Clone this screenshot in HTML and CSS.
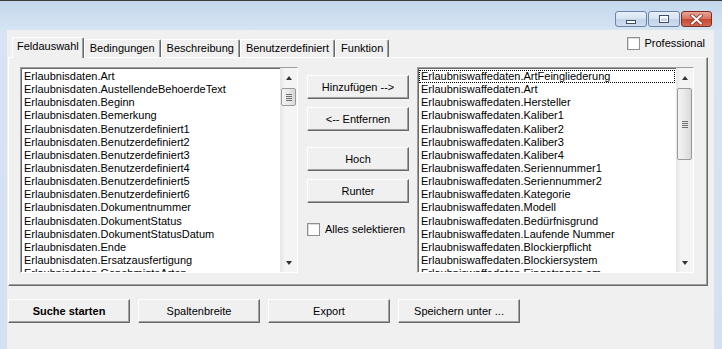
FILE: index.html
```html
<!DOCTYPE html>
<html>
<head>
	<meta charset="utf-8">
	<title>Suche</title>
	<link rel="stylesheet" href="styles.css">
</head>
<body>
	<div class="window">
		<div class="titlebar">
			<div class="caption">
				<span class="cap-btn cap-min"><i></i></span>
				<span class="cap-btn cap-max"><i></i></span>
				<span class="cap-btn cap-close">
					<svg width="13" height="11" viewBox="0 0 13 11">
						<path d="M2 1.5 L11 9.5 M11 1.5 L2 9.5" stroke="#7a2a1e" stroke-width="3.6" stroke-linecap="round"/>
						<path d="M2 1.5 L11 9.5 M11 1.5 L2 9.5" stroke="#fff" stroke-width="2.2" stroke-linecap="round"/>
					</svg>
				</span>
			</div>
		</div>

		<div class="client">
			<div class="topbar">
				<div class="tabs">
					<div class="tab active">Feldauswahl</div>
					<div class="tab">Bedingungen</div>
					<div class="tab">Beschreibung</div>
					<div class="tab">Benutzerdefiniert</div>
					<div class="tab">Funktion</div>
				</div>
				<label class="check pro"><span class="box"></span>Professional</label>
			</div>

			<div class="panel">
				<!-- linke Liste -->
				<div class="listbox list-left">
					<div class="items">
						<div class="item">Erlaubnisdaten.Art</div>
						<div class="item">Erlaubnisdaten.AustellendeBehoerdeText</div>
						<div class="item">Erlaubnisdaten.Beginn</div>
						<div class="item">Erlaubnisdaten.Bemerkung</div>
						<div class="item">Erlaubnisdaten.Benutzerdefiniert1</div>
						<div class="item">Erlaubnisdaten.Benutzerdefiniert2</div>
						<div class="item">Erlaubnisdaten.Benutzerdefiniert3</div>
						<div class="item">Erlaubnisdaten.Benutzerdefiniert4</div>
						<div class="item">Erlaubnisdaten.Benutzerdefiniert5</div>
						<div class="item">Erlaubnisdaten.Benutzerdefiniert6</div>
						<div class="item">Erlaubnisdaten.Dokumentnummer</div>
						<div class="item">Erlaubnisdaten.DokumentStatus</div>
						<div class="item">Erlaubnisdaten.DokumentStatusDatum</div>
						<div class="item">Erlaubnisdaten.Ende</div>
						<div class="item">Erlaubnisdaten.Ersatzausfertigung</div>
						<div class="item">Erlaubnisdaten.GenehmigteArten</div>
					</div>
					<div class="scroll">
						<div class="arrow up"></div>
						<div class="track"><div class="thumb thumb-small"><i></i></div></div>
						<div class="arrow down"></div>
					</div>
				</div>

				<!-- Knoepfe Mitte -->
				<div class="mid">
					<button class="btn">Hinzufügen --&gt;</button>
					<button class="btn">&lt;-- Entfernen</button>
					<button class="btn btn-hoch">Hoch</button>
					<button class="btn">Runter</button>
					<label class="check sel"><span class="box"></span>Alles selektieren</label>
				</div>

				<!-- rechte Liste -->
				<div class="listbox list-right">
					<div class="items">
						<div class="item focus">Erlaubniswaffedaten.ArtFeingliederung</div>
						<div class="item">Erlaubniswaffedaten.Art</div>
						<div class="item">Erlaubniswaffedaten.Hersteller</div>
						<div class="item">Erlaubniswaffedaten.Kaliber1</div>
						<div class="item">Erlaubniswaffedaten.Kaliber2</div>
						<div class="item">Erlaubniswaffedaten.Kaliber3</div>
						<div class="item">Erlaubniswaffedaten.Kaliber4</div>
						<div class="item">Erlaubniswaffedaten.Seriennummer1</div>
						<div class="item">Erlaubniswaffedaten.Seriennummer2</div>
						<div class="item">Erlaubniswaffedaten.Kategorie</div>
						<div class="item">Erlaubniswaffedaten.Modell</div>
						<div class="item">Erlaubniswaffedaten.Bedürfnisgrund</div>
						<div class="item">Erlaubniswaffedaten.Laufende Nummer</div>
						<div class="item">Erlaubniswaffedaten.Blockierpflicht</div>
						<div class="item">Erlaubniswaffedaten.Blockiersystem</div>
						<div class="item">Erlaubniswaffedaten.Eingetragen am</div>
					</div>
					<div class="scroll">
						<div class="arrow up"></div>
						<div class="track"><div class="thumb thumb-big"><i></i></div></div>
						<div class="arrow down"></div>
					</div>
				</div>
			</div>

			<div class="actions">
				<button class="btn btn-wide btn-bold">Suche starten</button>
				<button class="btn btn-wide">Spaltenbreite</button>
				<button class="btn btn-wide">Export</button>
				<button class="btn btn-wide">Speichern unter ...</button>
			</div>
		</div>
	</div>
</body>
</html>
```

FILE: styles.css
```css
*{
	box-sizing: border-box;
}
body{
	margin: 0;
	height: 349px;
	overflow: hidden;
	background: linear-gradient(#c3d7ec, #d6e4f3 30px, #d3e2f2);
	font-family: "Liberation Sans", Arial, sans-serif;
	font-size: 11px;
	color: #000;
}
/*--------Fenster-----------*/
.window{
	height: 349px;
	border-top: 1px solid #3c3c3c;
	display: flex;
	flex-direction: column;
}
.titlebar{
	height: 29px;
	flex-shrink: 0;
	display: flex;
	justify-content: flex-end;
	padding: 10px 10px 0 0;
}
.caption{
	display: flex;
	gap: 1px;
}
.cap-btn{
	width: 32px;
	height: 16px;
	border: 1px solid #6b84a8;
	border-radius: 3px;
	background: linear-gradient(#e9f0f8, #d5e2f1 50%, #c2d4ea 51%, #cfdcee);
	display: flex;
	align-items: center;
	justify-content: center;
}
.cap-min i{
	width: 10px;
	height: 4px;
	margin-top: 5px;
	background: #fff;
	border: 1px solid #3c4e68;
}
.cap-max i{
	width: 10px;
	height: 8px;
	background: transparent;
	border: 1px solid #3c4e68;
	box-shadow: inset 0 0 0 1px #fff, inset 0 2px #fff;
}
.cap-close{
	width: 31px;
	border-color: #7d2c20;
	background: linear-gradient(#e9a597, #d7705e 50%, #c8472f 51%, #d26a55);
}
/*--------Fenster-----------*/

.client{
	flex: 1;
	margin: 0 8px 0 7px;
	padding: 0 6px 0 1px;
	background: #f0f0f0;
}

/*--------Reiter-----------*/
.topbar{
	height: 27px;
	display: flex;
	align-items: flex-end;
}
.tabs{
	display: flex;
	align-items: flex-end;
	padding-left: 4px;
}
.tab{
	height: 18px;
	padding: 0 5px;
	line-height: 17px;
	border: 1px solid #fff;
	border-right-color: #696969;
	border-bottom: none;
	border-radius: 2px 2px 0 0;
	box-shadow: inset -1px 0 #a0a0a0;
}
.tab.active{
	height: 21px;
	padding: 0 4px;
	line-height: 16px;
	margin-bottom: -1px;
	background: #f0f0f0;
	position: relative;
	z-index: 1;
}
/*--------Reiter-----------*/

/*--------Checkboxen-----------*/
.check{
	display: flex;
	align-items: center;
	line-height: 13px;
}
.box{
	width: 13px;
	height: 13px;
	border: 1px solid #8e8f8f;
	background: #fff;
	box-shadow: inset 1px 1px #dcdcdc;
	margin-right: 4px;
}
.pro{
	margin-left: auto;
	margin-right: 3px;
	align-self: flex-start;
	margin-top: 7px;
}
.sel{
	margin-top: 12px;
}
.sel .box{
	margin-right: 5px;
}
/*--------Checkboxen-----------*/

.panel{
	height: 229px;
	display: flex;
	padding: 9px 12px 0 11px;
	border: 1px solid #fff;
	border-right-color: #696969;
	border-bottom-color: #696969;
	box-shadow: inset -1px -1px #a0a0a0;
}

/*--------Listen-----------*/
.listbox{
	height: 206px;
	display: flex;
	background: #fff;
	border: 1px solid #a0a0a0;
	border-right-color: #fff;
	border-bottom-color: #fff;
	box-shadow: inset 1px 1px #696969;
	overflow: hidden;
}
.list-left{
	width: 278px;
}
.list-right{
	width: 277px;
}
.items{
	flex: 1;
	padding: 2px 1px 0 1px;
	overflow: hidden;
}
.item{
	height: 13.15px;
	line-height: 13px;
	padding-left: 2px;
	white-space: nowrap;
}
.item.focus{
	outline: 1px dotted #000;
	outline-offset: -1px;
}
.scroll{
	width: 17px;
	display: flex;
	flex-direction: column;
	background: linear-gradient(90deg, #e6e6e6, #f4f4f4 30%, #f4f4f4);
}
.arrow{
	height: 19px;
	display: flex;
	align-items: center;
	justify-content: center;
}
.arrow::after{
	content: "";
	border-left: 3.5px solid transparent;
	border-right: 3.5px solid transparent;
}
.arrow.up::after{
	border-bottom: 4px solid #333;
}
.arrow.down::after{
	border-top: 4px solid #333;
}
.track{
	flex: 1;
	padding: 1px 1px 0 1px;
}
.thumb{
	border: 1px solid #9a9a9a;
	border-radius: 2px;
	background: linear-gradient(90deg, #f3f3f3, #e9e9e9 50%, #d8d8d8);
	display: flex;
	align-items: center;
	justify-content: center;
}
.thumb i{
	width: 6px;
	height: 7px;
	background: repeating-linear-gradient(#6e6e6e 0 1px, transparent 1px 2px);
}
.thumb-small{
	height: 18px;
}
.thumb-big{
	height: 72px;
}
/*--------Listen-----------*/

/*--------Knoepfe-----------*/
.mid{
	width: 102px;
	margin: 0 8px 0 9px;
	padding-top: 8px;
	display: flex;
	flex-direction: column;
	gap: 8px;
}
.mid .check{
	gap: 0;
}
.btn{
	height: 24px;
	padding: 0;
	font-family: inherit;
	font-size: 11px;
	color: #000;
	background: #f0f0f0;
	border: 1px solid #fff;
	border-right-color: #696969;
	border-bottom-color: #696969;
	box-shadow: inset -1px -1px #a0a0a0;
}
.btn-hoch{
	margin-top: 8px;
}
.actions{
	display: flex;
	gap: 8px;
	margin-top: 13px;
}
.btn-wide{
	width: 122px;
}
.btn-bold{
	font-weight: bold;
}
/*--------Knoepfe-----------*/
```
